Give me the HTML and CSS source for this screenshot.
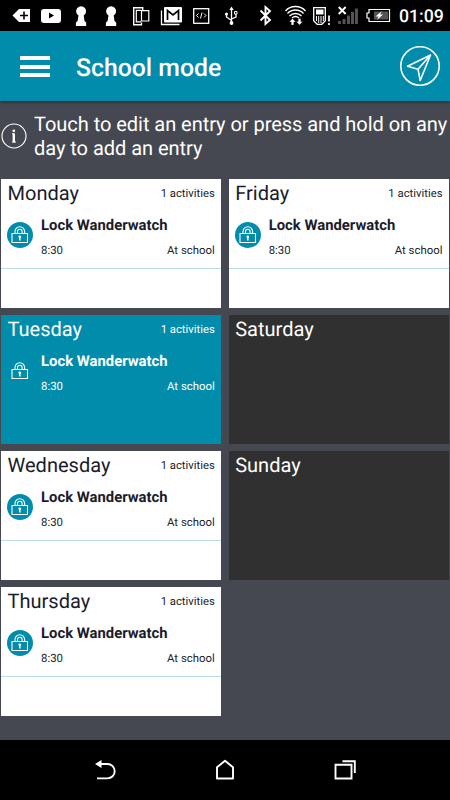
FILE: index.html
```html
<!DOCTYPE html>
<html lang="en">
<head>
<meta charset="utf-8">
<title>School mode</title>
<link rel="stylesheet" href="styles.css">
</head>
<body>
<svg class="defs" width="0" height="0" aria-hidden="true">
  <symbol id="lock" viewBox="0 0 26 26">
    <path d="M5 11.500h15.500v9H5zM8 11v-1.500a4.800 4.800 0 0 1 9.600 0V11M10.500 11V9.500a2.300 2.300 0 0 1 4.600 0V11" fill="none" stroke="currentColor" stroke-width="1.100"/>
    <circle cx="12.800" cy="14.800" r="1.400" fill="currentColor"/>
    <path d="M12.100 14h1.500v4.500h-1.500z" fill="currentColor"/>
  </symbol>
</svg>
<div class="screen">
  <div class="status">
    <svg class="status-icons" width="396" height="31" viewBox="0 0 396 31" fill="none" stroke="#fff">
      <path d="M12.500 15.500L19 9h11v13H19z" fill="#fff" stroke="none"/>
      <path d="M24 11.500v8M20 15.500h8" stroke="#000" stroke-width="1.600"/>
      <rect x="41" y="9" width="20" height="14" rx="3" fill="#fff" stroke="none"/>
      <path d="M49 12.500v6l5-3z" fill="#000" stroke="none"/>
      <g fill="#fff" stroke="none">
        <path id="pawn" d="M78.500 15.500a5 5 0 1 1 5.200 0l.8 5.500 1.700 1.500V26H75.900v-3.500l1.700-1.500z"/>
        <use href="#pawn" x="30"/>
      </g>
      <path d="M141.500 22.500v2.200h-7.800V7.700h9V10" stroke-width="1.400"/>
      <path d="M141 10.300h-4.700v11.500h4.700M141.500 10.700h7.300v10.300h-7.300z" stroke-width="1.200"/>
      <path d="M161.500 10.500V24.500h18" stroke-width="1.300"/>
      <rect x="164" y="7" width="18" height="15.500" rx="1" fill="#fff" stroke="none"/>
      <path d="M167.500 20V10.500l5.500 4.500 5.500-4.500V20" stroke="#000" stroke-width="1.700"/>
      <rect x="193.700" y="8.700" width="15" height="14.600" stroke-width="1.300"/>
      <path d="M198.500 13.500l-2 2 2 2M204 13.500l2 2-2 2M202 12.500l-1.500 6" stroke-width="1"/>
      <path d="M231.500 9v14M226.500 13.500v3.500l5 3.500M236 14v3l-4.500 2" stroke-width="1.300"/>
      <path d="M231.500 6.500l2.200 3.500h-4.400z" fill="#fff" stroke="none"/>
      <circle cx="231.500" cy="23" r="1.900" fill="#fff" stroke="none"/>
      <circle cx="226.500" cy="14" r="1.500" fill="#fff" stroke="none"/>
      <path d="M234.500 11.500h2.500v2.500h-2.500z" stroke-width="1"/>
      <path d="M260.500 10.500l9.500 9.500-4.500 4V7l4.500 4-9.500 9.500" stroke-width="1.900"/>
      <path d="M285.500 11a13.500 13.500 0 0 1 20 0M287.500 13.500a11 11 0 0 1 16 0M289.500 16a8.500 8.500 0 0 1 12 0M292 18a5.500 5.500 0 0 1 7 0" stroke-width="1.400"/>
      <path d="M292.500 18.500l3.300 3.500h-2v3h-2.600v-3h-2zM299.500 25l3.300-3.500h-2v-3h-2.600v3h-2z" fill="#fff" stroke="#000" stroke-width=".3"/>
      <path d="M313.700 7.700h11.600v13l-3.500 3.600h-4.600l-3.500-3.600z" stroke-width="1.300"/>
      <path d="M316 9.500h7.500v5H316z" fill="#fff" stroke="none"/>
      <path d="M316.500 16v5M318.700 16v7M321 16v7M323.300 16v5" stroke-width="1"/>
      <path d="M329 15.500v6M329 23v2" stroke-width="1.700"/>
      <path d="M339.500 21v3M344 19v5M348.500 15.500v8.500M352.500 12v12M356.500 8.500V24" stroke="#555" stroke-width="2.900"/>
      <path d="M338.700 7l7 7M345.700 7l-7 7" stroke-width="1.900"/>
      <path d="M369 13h-2v5h2v3.500h20.500v-12H369z" stroke-width="1.200"/>
      <path d="M374 11.500h14v8h-14z" fill="#555" stroke="none"/>
      <path d="M382 11l-6.500 5.500h3L377 20l6-5.500h-3z" fill="#fff" stroke="none"/>
    </svg>
    <span class="clock">01:09</span>
  </div>

  <header class="bar">
    <div class="menu"><i></i><i></i><i></i></div>
    <h1>School mode</h1>
    <svg class="send" width="42" height="42" viewBox="0 0 42 42" fill="none" stroke="#fff" stroke-width="1.600" stroke-linejoin="round">
      <circle cx="21" cy="21" r="19.200"/>
      <path d="M31.500 10L8.500 21.200l10.500 3 2.200 11.300zM31.500 10L19 24.200"/>
    </svg>
  </header>

  <div class="hint">
    <svg width="26" height="26" viewBox="0 0 26 26">
      <circle cx="13" cy="13" r="12" fill="none" stroke="#fff" stroke-width="1.100"/>
      <circle cx="12.800" cy="7.800" r="1.400" fill="#fff"/>
      <path d="M11 10.800h2M11 19h4" fill="none" stroke="#fff" stroke-width="1"/>
      <path d="M12.800 10.500v8.800" stroke="#fff" stroke-width="2.400"/>
    </svg>
    <p>Touch to edit an entry or press and hold on any<br>day to add an entry</p>
  </div>

  <main class="days">
    <section class="day">
      <div class="head"><h2>Monday</h2><span>1 activities</span></div>
      <div class="entry"><svg class="lock"><use href="#lock"/></svg><div class="info"><b>Lock Wanderwatch</b><div class="meta"><span>8:30</span><span>At school</span></div></div></div>
    </section>
    <section class="day selected">
      <div class="head"><h2>Tuesday</h2><span>1 activities</span></div>
      <div class="entry"><svg class="lock"><use href="#lock"/></svg><div class="info"><b>Lock Wanderwatch</b><div class="meta"><span>8:30</span><span>At school</span></div></div></div>
    </section>
    <section class="day">
      <div class="head"><h2>Wednesday</h2><span>1 activities</span></div>
      <div class="entry"><svg class="lock"><use href="#lock"/></svg><div class="info"><b>Lock Wanderwatch</b><div class="meta"><span>8:30</span><span>At school</span></div></div></div>
    </section>
    <section class="day">
      <div class="head"><h2>Thursday</h2><span>1 activities</span></div>
      <div class="entry"><svg class="lock"><use href="#lock"/></svg><div class="info"><b>Lock Wanderwatch</b><div class="meta"><span>8:30</span><span>At school</span></div></div></div>
    </section>
    <section class="day">
      <div class="head"><h2>Friday</h2><span>1 activities</span></div>
      <div class="entry"><svg class="lock"><use href="#lock"/></svg><div class="info"><b>Lock Wanderwatch</b><div class="meta"><span>8:30</span><span>At school</span></div></div></div>
    </section>
    <section class="day empty"><div class="head"><h2>Saturday</h2></div></section>
    <section class="day empty"><div class="head"><h2>Sunday</h2></div></section>
  </main>

  <nav class="nav">
    <svg width="24" height="24" viewBox="0 0 24 24" fill="none" stroke="#fff" stroke-width="1.900">
      <path d="M6 6h8.500a7.200 7.200 0 0 1 0 14.400H4"/><path d="M2 6l6.500-4v8z" fill="#fff" stroke="none"/>
    </svg>
    <svg width="24" height="24" viewBox="0 0 24 24" fill="none" stroke="#fff" stroke-width="1.900" stroke-linejoin="round">
      <path d="M4 20.500V9.300l8-6.500 8 6.500v11.200z"/>
    </svg>
    <svg width="24" height="24" viewBox="0 0 24 24" fill="none" stroke="#fff" stroke-width="1.900">
      <path d="M2.500 6.800h16v13.700h-16zM9.500 3.200h12.300V15"/>
    </svg>
  </nav>
</div>
</body>
</html>
```
FILE: styles.css
```css
* { box-sizing: border-box; }
body {
  margin: 0;
  background: #000;
  font-family: Roboto, "Liberation Sans", sans-serif;
  text-rendering: geometricPrecision;
}
h1, h2, p { margin: 0; font-weight: 400; }
svg { display: block; flex: none; }
.defs { position: absolute; }
.screen {
  width: 450px;
  height: 800px;
  display: flex;
  flex-direction: column;
  overflow: hidden;
  background: #454851;
}
.status {
  height: 31px;
  flex: none;
  display: flex;
  background: #000;
  color: #fff;
}
.clock { margin-left: 3px; font-size: 17.700px; line-height: 34px; font-weight: 500; white-space: nowrap; }
.bar {
  height: 70px;
  flex: none;
  display: flex;
  align-items: center;
  padding: 0 9px 0 20px;
  background: #018cac;
  box-shadow: 0 1px 3px rgba(0, 0, 0, .5);
}
.menu { width: 30px; display: grid; gap: 4.500px; margin-top: 1px; }
.menu i { height: 4px; background: #fff; }
.bar h1 { margin: 5px 0 0 26px; color: #fff; font-size: 24.800px; font-weight: 500; line-height: 30px; }
.send { margin-left: auto; }
.hint {
  height: 77.700px;
  flex: none;
  display: flex;
  padding: 12px 0 0 1px;
  color: #fff;
}
.hint svg { margin-top: 10px; }
.hint p { margin: -1px 0 0 7px; font-size: 20.050px; line-height: 24px; letter-spacing: -.050px; white-space: nowrap; }
.days {
  flex: 1;
  display: grid;
  grid-template-columns: 220.300px 220.300px;
  grid-template-rows: repeat(4, 129px);
  grid-auto-flow: column;
  gap: 7.250px 7.400px;
  padding-left: 1px;
}
.day { background: #fff; color: #1b1c2b; }
.head { display: flex; justify-content: space-between; height: 33px; padding: 0 6.500px 0 6.500px; }
.head h2 { font-size: 20.050px; line-height: 28px; }
.head span { font-size: 11.300px; line-height: 29px; }
.entry { display: flex; height: 57px; padding: 10px 6.500px 0 6px; border-bottom: 1px solid #b8dfe8; }
.lock { width: 26px; height: 26px; border-radius: 50%; background: #018cac; color: #fff; }
.info { flex: 1; margin-left: 8px; }
.info b { display: block; margin-top: -7px; font-size: 14.850px; line-height: 20px; font-weight: 700; }
.meta { display: flex; justify-content: space-between; margin-top: 7px; font-size: 11.400px; line-height: 16px; }
.selected { background: #018cac; color: #fff; }
.selected .entry { border-color: transparent; }
.empty { background: #303030; color: #fff; }
.nav {
  height: 60px;
  flex: none;
  display: flex;
  justify-content: space-between;
  align-items: center;
  padding: 0 93px;
  background: #000;
}
```
